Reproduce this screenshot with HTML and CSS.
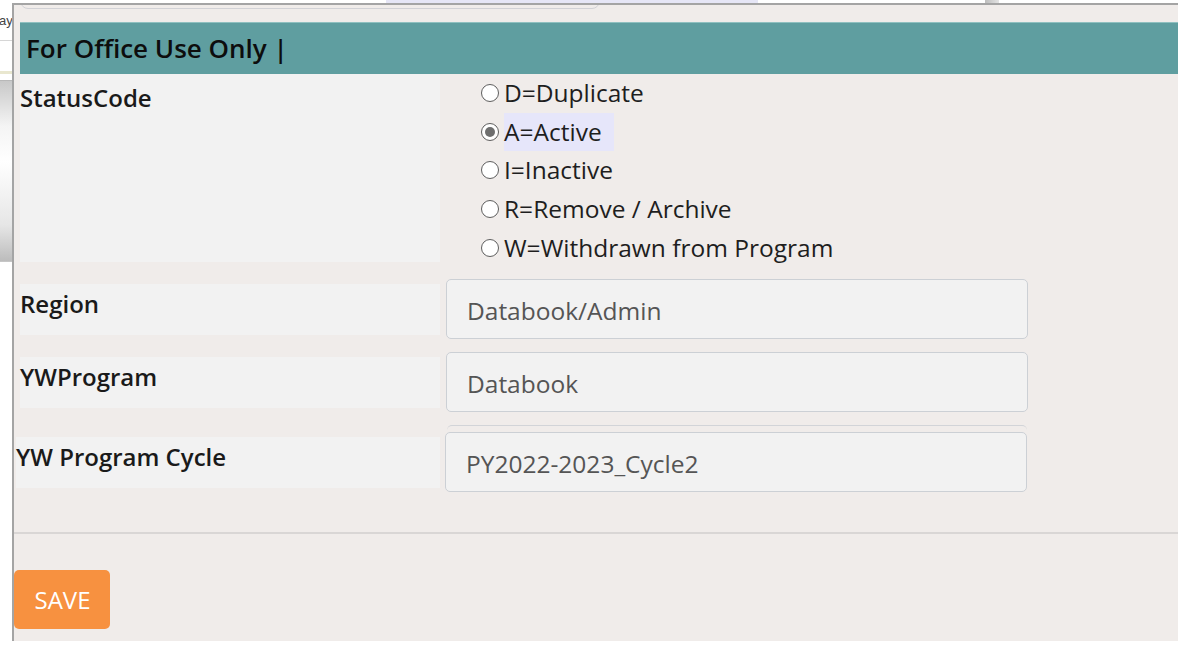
FILE: index.html
```html
<!DOCTYPE html>
<html lang="en">
<head>
<meta charset="utf-8">
<title>Participant record</title>
<link rel="stylesheet" href="styles.css">
</head>
<body>
  <div class="page">
    <div class="page-tab"></div>
    <div class="page-grip"></div>
    <div class="page-side">
      <span class="side-text">ay</span>
      <div class="side-rule"></div>
      <div class="side-note"></div>
      <div class="side-panel"></div>
    </div>
  </div>

  <div class="modal">
    <div class="modal-shadow-edge"></div>
    <form class="office-form">
      <h2 class="section-title">For Office Use Only |</h2>

      <div class="field-row status-row">
        <div class="field-label tall">StatusCode</div>
        <div class="radio-list">
          <label class="radio-item"><span class="radio"></span><span class="radio-text">D=Duplicate</span></label>
          <label class="radio-item"><span class="radio checked"></span><span class="radio-text selected">A=Active</span></label>
          <label class="radio-item"><span class="radio"></span><span class="radio-text">I=Inactive</span></label>
          <label class="radio-item"><span class="radio"></span><span class="radio-text">R=Remove / Archive</span></label>
          <label class="radio-item"><span class="radio"></span><span class="radio-text">W=Withdrawn from Program</span></label>
        </div>
      </div>

      <div class="field-row region-row">
        <div class="field-label">Region</div>
        <div class="text-input">Databook/Admin</div>
      </div>

      <div class="field-row">
        <div class="field-label">YWProgram</div>
        <div class="text-input">Databook</div>
      </div>

      <div class="field-row cycle-row">
        <div class="field-label">YW Program Cycle</div>
        <div class="input-stack">
          <div class="input-ghost"></div>
          <div class="text-input">PY2022-2023_Cycle2</div>
        </div>
      </div>

      <hr class="form-rule">

      <button type="button" class="save-btn">SAVE</button>
    </form>
  </div>
</body>
</html>
```

FILE: styles.css
```css
* {
  box-sizing: border-box;
}

html, body {
  margin: 0;
  padding: 0;
  background: #ffffff;
  width: 1178px;
  height: 649px;
  overflow: hidden;
}

body {
  font-family: "Open Sans", "Noto Sans", sans-serif;
  position: relative;
}

/* the page behind the dialog */
.page {
  position: absolute;
  inset: 0;
}

.page-tab {
  position: absolute;
  left: 386px;
  top: 0;
  width: 372px;
  height: 3px;
  background: #e6e6f6;
}

.page-grip {
  position: absolute;
  left: 985px;
  top: 0;
  width: 14px;
  height: 4px;
  background: linear-gradient(90deg, #bdbdbd, #e4e4e4);
}

.page-side {
  position: absolute;
  left: 0;
  top: 0;
  width: 12px;
  height: 649px;
  overflow: hidden;
}

.side-text {
  position: absolute;
  left: -1px;
  top: 13px;
  font-family: "Liberation Sans", Arial, sans-serif;
  font-size: 13px;
  color: #444;
}

.side-rule {
  position: absolute;
  left: 0;
  top: 40px;
  width: 12px;
  height: 1px;
  background: #d6d6d6;
}

.side-note {
  position: absolute;
  left: 0;
  top: 71px;
  width: 12px;
  height: 3px;
  background: #e9e7cf;
}

.side-panel {
  position: absolute;
  left: 0;
  top: 80px;
  width: 12px;
  height: 182px;
  border-top: 1px solid #b8b8b8;
  border-bottom: 1px solid #c6c6c6;
  background: linear-gradient(180deg, #c8c8c8 0%, #f4f4f4 25%, #ffffff 45%, #e6e6e6 80%, #bcbcbc 100%);
}

/* dialog */
.modal {
  position: absolute;
  left: 12px;
  top: 3px;
  width: 1166px;
  height: 638px;
  background: #f0ecea;
  border-left: 2px solid #a4a4a4;
  border-top: 2px solid #a4a4a4;
  overflow: hidden;
}

.modal-shadow-edge {
  position: absolute;
  left: 6px;
  top: -9px;
  width: 580px;
  height: 13px;
  border: 1px solid #d2d2d6;
  border-radius: 0 0 8px 8px;
  background: #f0ecea;
}

.office-form {
  display: flex;
  flex-direction: column;
  padding-top: 17px;
}

.section-title {
  margin: 0 0 0 6px;
  height: 52px;
  background: #5f9ea0;
  color: #0d0d0d;
  font-size: 26px;
  font-weight: 600;
  line-height: 50px;
  padding-left: 6px;
  border-top: 1px solid #8fc0c0;
}

.field-row {
  display: flex;
  align-items: flex-start;
  gap: 6px;
  margin-left: 6px;
  margin-top: 13px;
}

.field-label {
  width: 420px;
  height: 51px;
  margin-top: 5px;
  background: #f2f2f2;
  font-size: 24px;
  font-weight: 600;
  color: #1a1a1a;
  line-height: 40px;
}

.status-row {
  margin-top: 0;
  gap: 0;
  height: 188px;
}

.region-row {
  margin-top: 17px;
}

.field-label.tall {
  margin-top: 0;
  height: 188px;
  line-height: 48px;
}

.radio-list {
  display: flex;
  flex-direction: column;
  padding-left: 41px;
}

.radio-item {
  display: flex;
  align-items: center;
  height: 38.6px;
  font-size: 24.5px;
  color: #1e1e1e;
}

.radio {
  width: 18px;
  height: 18px;
  border: 1.5px solid #5e5e5e;
  border-radius: 50%;
  background: #ffffff;
  margin-right: 5px;
  flex-shrink: 0;
  display: flex;
  align-items: center;
  justify-content: center;
}

.radio.checked::after {
  content: "";
  width: 10px;
  height: 10px;
  border-radius: 50%;
  background: #6e6e6e;
}

.radio-text {
  line-height: 38px;
}

.radio-text.selected {
  background: #e6e6fa;
  padding-right: 12px;
}

.text-input {
  width: 582px;
  height: 60px;
  border: 1px solid #ccd0d5;
  border-radius: 5px;
  background: #f2f2f2;
  padding-left: 20px;
  font-size: 24.5px;
  color: #555555;
  line-height: 62px;
}

.cycle-row {
  margin-left: 2px;
  margin-top: 13px;
  gap: 5px;
}

.cycle-row .field-label {
  width: 424px;
  margin-top: 12px;
}

.input-stack {
  display: flex;
  flex-direction: column;
}

.input-ghost {
  width: 580px;
  height: 7px;
  margin-left: 2px;
  border-top: 1px solid #d2d4d8;
  border-radius: 5px 5px 0 0;
}

.form-rule {
  margin: 40px 0 0 0;
  border: 0;
  border-top: 2px solid #d9d6d5;
}

.save-btn {
  align-self: flex-start;
  margin-top: 36px;
  width: 96px;
  height: 59px;
  border: 0;
  border-radius: 5px;
  background: #f79140;
  color: #ffffff;
  font-family: "Open Sans", "Noto Sans", sans-serif;
  font-size: 24px;
  padding: 0 0 0 1px;
}
```
